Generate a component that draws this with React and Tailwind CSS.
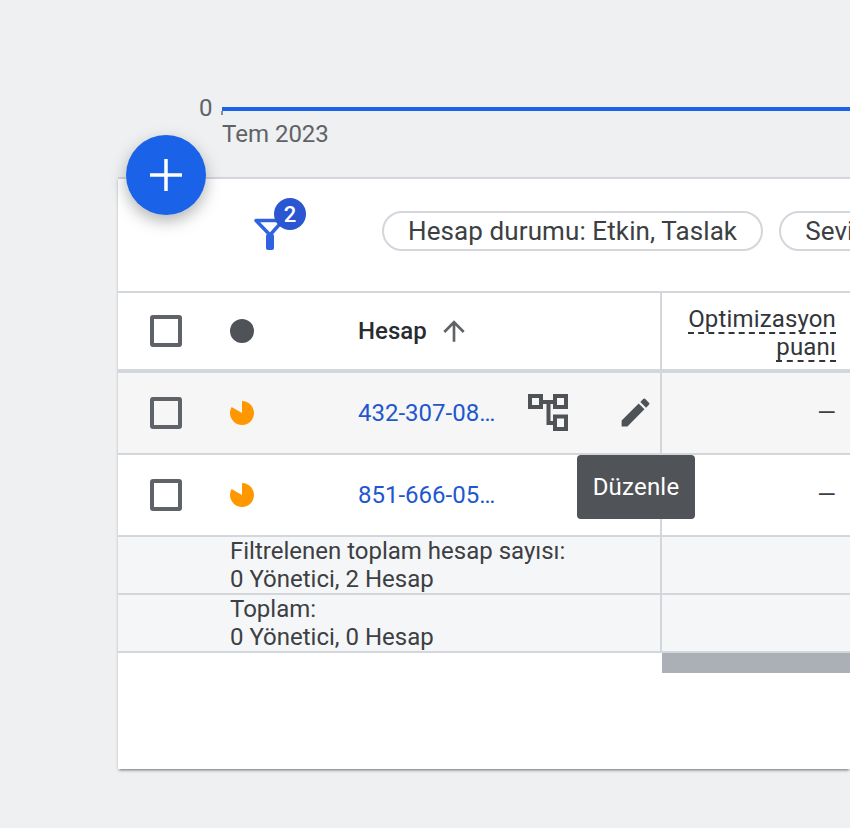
import React from "react";

const Check = () => (
  <div className="w-8 h-8 shrink-0 ml-8 border-4 border-[#5f6368] rounded-[3px]" />
);

const Pie = () => (
  <svg width="24" height="24" viewBox="0 0 24 24" className="shrink-0 ml-12">
    <path d="M12 12 L12 0 A12 12 0 1 1 1.6 6 Z" fill="#ff9800" />
  </svg>
);

const Hierarchy = () => (
  <svg width="42" height="38" viewBox="0 0 42 38" fill="none" stroke="#4f5357" strokeWidth="4" className="block">
    <rect x="2" y="2" width="11" height="11" />
    <rect x="27" y="2" width="11" height="11" />
    <rect x="27" y="22.5" width="11" height="12.5" />
    <path d="M14 8 H27 M20.5 8 V29 H27" />
  </svg>
);

const Pencil = () => (
  <svg width="37" height="37" viewBox="0 0 24 24" fill="#4f5357" className="block">
    <path d="M3 17.25V21h3.75L17.81 9.94l-3.75-3.75L3 17.25zM20.71 7.04a.996.996 0 0 0 0-1.41l-2.34-2.34a.996.996 0 0 0-1.41 0l-1.83 1.83 3.75 3.75 1.83-1.83z" />
  </svg>
);

const Row = ({ id, bg, icons }) => (
  <div className={`flex h-[80px] border-b-2 border-[#d3d6db] box-content ${bg}`}>
    <div className="w-[542px] shrink-0 flex items-center">
      <Check />
      <Pie />
      <a className="ml-[104px] w-[140px] text-[24px] text-[#1f57cf] whitespace-nowrap">{id}</a>
      {icons && (
        <div className="flex items-center">
          <div className="ml-[30px] -mt-[1px]"><Hierarchy /></div>
          <div className="ml-[47px] -mt-[2px]"><Pencil /></div>
        </div>
      )}
    </div>
    <div className="flex-1 border-l-2 border-[#d3d6db] flex items-center justify-end pr-[14px] text-[24px] text-[#3c4043]">—</div>
  </div>
);

const Total = ({ a, b }) => (
  <div className="flex h-[56px] box-content border-b-2 border-[#d3d6db] bg-[#f5f6f8]">
    <div className="w-[542px] shrink-0 pl-[112px] text-[24px] leading-[28px] text-[#3c4043] whitespace-nowrap">
      <div>{a}</div>
      <div>{b}</div>
    </div>
    <div className="flex-1 border-l-2 border-[#d3d6db]" />
  </div>
);

export default function App() {
  return (
    <div className="relative w-[850px] h-[828px] overflow-hidden bg-[#eff0f2] font-['Roboto',sans-serif]">
      <div className="h-[177px] pt-[96px]">
        <div className="flex items-center h-6 pl-[199px] text-[24px] text-[#5f6368]">
          <span className="w-[23px]">0</span>
          <div className="relative flex-1 h-1 bg-[#1a62e8] mt-[2px]">
            <div className="absolute left-[-1px] top-1 w-[2px] h-1 bg-[#8a8d91]" />
          </div>
        </div>
        <div className="pl-[222px] text-[24px] leading-7 text-[#5f6368]">Tem 2023</div>
      </div>

      <div className="ml-[118px] h-[592px] bg-white border-t-2 border-[#d3d6db] shadow-[0_2px_3px_-1px_rgba(60,64,67,0.75)]">
        <div className="h-[80px] flex items-start overflow-hidden pt-[32px] border-b-2 border-[#d3d6db] box-content">
          <svg width="36" height="36" viewBox="0 0 36 36" fill="none" className="ml-[134px] mt-[6px] shrink-0">
            <path d="M4 3.5 H31 L18 18 Z" stroke="#2f63e0" strokeWidth="3.4" strokeLinejoin="round" />
            <rect x="14" y="17" width="8" height="16" rx="2" fill="#2f63e0" />
          </svg>
          <div className="ml-[94px] shrink-0 h-10 px-6 rounded-full border-2 border-[#d3d6db] flex items-center text-[26px] tracking-[0.1px] text-[#3c4043] whitespace-nowrap">
            Hesap durumu: Etkin, Taslak
          </div>
          <div className="ml-4 shrink-0 h-10 px-6 rounded-full border-2 border-[#d3d6db] flex items-center text-[26px] tracking-[0.1px] text-[#3c4043] whitespace-nowrap">
            Seviye
          </div>
        </div>

        <div className="flex h-[76px] box-content border-b-4 border-[#d3d6db]">
          <div className="w-[542px] shrink-0 flex items-center">
            <Check />
            <div className="w-6 h-6 ml-12 rounded-full bg-[#4f5357] shrink-0" />
            <span className="ml-[104px] text-[24px] font-medium text-[#282c30]">Hesap</span>
            <svg width="32" height="32" viewBox="0 0 24 24" fill="#5f6368" className="ml-[11px]">
              <path d="M4 12l1.41 1.41L11 7.83V20h2V7.83l5.58 5.59L20 12l-8-8-8 8z" />
            </svg>
          </div>
          <div className="flex-1 border-l-2 border-[#d3d6db] flex flex-col items-end pt-[13px] pr-[14px] text-[24px] tracking-[0.15px] text-[#32363a]">
            <span className="border-b-2 border-dashed border-[#32363a] leading-[26px]">Optimizasyon</span>
            <span className="border-b-2 border-dashed border-[#32363a] leading-[26px]">puanı</span>
          </div>
        </div>

        <Row id="432-307-08…" bg="bg-[#f6f6f6]" icons />
        <Row id="851-666-05…" bg="bg-white" />
        <Total a="Filtrelenen toplam hesap sayısı:" b="0 Yönetici, 2 Hesap" />
        <Total a="Toplam:" b="0 Yönetici, 0 Hesap" />
        <div className="ml-[544px] h-5 bg-[#abafb6]" />
      </div>

      <div className="absolute left-[126px] top-[135px] w-20 h-20 rounded-full bg-[#1a62e8] flex items-center justify-center shadow-[0_6px_16px_rgba(60,64,67,0.4)]">
        <svg width="32" height="32" viewBox="0 0 32 32" fill="#fff">
          <path d="M14.25 0h3.5v14.25H32v3.5H17.75V32h-3.5V17.75H0v-3.5h14.25z" />
        </svg>
      </div>

      <div className="absolute left-[274px] top-[198px] w-8 h-8 rounded-full bg-[#2a56d1] text-white text-[22px] font-medium flex items-center justify-center">2</div>

      <div className="absolute left-[577px] top-[455px] w-[118px] h-16 rounded bg-[#505357] text-white text-[24px] tracking-[0.2px] flex items-center justify-center">Düzenle</div>
    </div>
  );
}
